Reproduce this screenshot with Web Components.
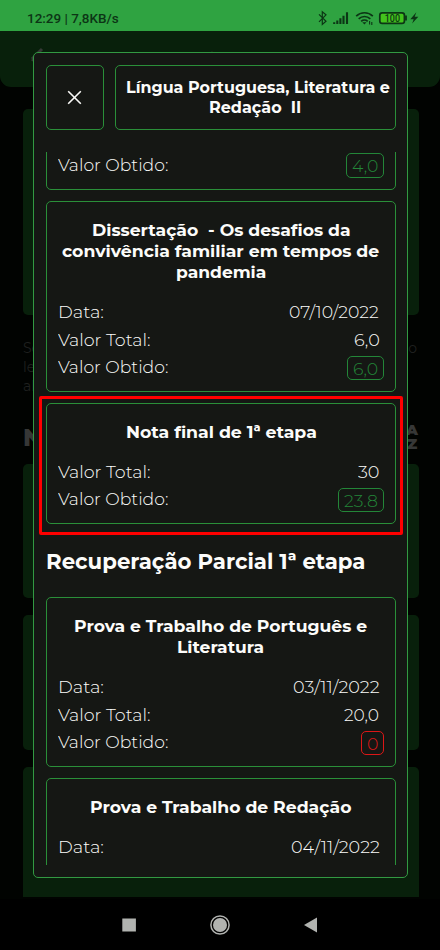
<!DOCTYPE html>
<html lang="pt-BR">
<head>
<meta charset="utf-8">
<title>Notas</title>
<style>
html,body{margin:0;width:440px;height:950px;overflow:hidden;background:#000}
body{font-family:Montserrat,Inter,"Open Sans",sans-serif;color:#fcfcfa}
</style>
</head>
<body>
<phone-screen></phone-screen>
<script>
const define=(name,html,init)=>customElements.define(name,class extends HTMLElement{
  connectedCallback(){
    if(this.shadowRoot)return;
    const t=document.createElement('template');
    t.innerHTML=typeof html==='function'?html(this):html;
    this.attachShadow({mode:'open'}).append(t.content.cloneNode(true));
    if(init)init(this,this.shadowRoot);
  }
});

/* One line of text, condensed or widened to a set width. */
define('fit-line',el=>`<style>:host{display:block;width:${el.getAttribute('w')}px;flex:none;white-space:pre}
span{display:inline-block;transform-origin:0 50%}</style><span></span>`,(el,r)=>{
  const s=r.querySelector('span');s.textContent=el.getAttribute('text');
  if(s.offsetWidth)s.style.transform=`scaleX(${el.getAttribute('w')/s.offsetWidth})`;
});

define('status-bar',`<style>
:host{display:flex;justify-content:space-between;height:31px;background:#2fa341;color:#0c3515;box-sizing:border-box;padding:10px 21px 0 27px;font:500 13.4px/17px Roboto,sans-serif}
svg{display:block;flex:none;margin-top:-10px}</style>
<fit-line w="91.5" text="12:29 | 7,8KB/s"></fit-line>
<svg width="104" height="31" viewBox="315 0 104 31" fill="none" stroke="#0c3515">
<path d="M319 14.3l7 7-3.7 3.2v-12.8l3.7 3.2-7 7" stroke-width="1.2"/>
<path d="M334.2 24v-1.8M337.3 24v-3.6M340.4 24v-5.8M343.5 24v-8.3M347 24v-11.8" stroke-width="2.1"/>
<path d="M356.2 16.1a12 12 0 0 1 16.6 0M358.7 18.8a8.5 8.5 0 0 1 11.6 0M361.2 21.4a4.8 4.8 0 0 1 6.5 0" stroke-width="1.7"/>
<path d="M362.3 22.3h4.2l-2.1 2.2z" fill="#0c3515" stroke="none"/>
<path d="M369.6 21v3.4M371.8 22v3" stroke-width="1.1"/>
<rect x="379.8" y="12.8" width="24.6" height="10.6" rx="2.4" fill="#43c31c" stroke-width="1.7"/>
<path d="M406 15.5v5" stroke-width="1.8"/>
<text x="384.7" y="22" font-family="Roboto,sans-serif" font-size="10" font-weight="500" fill="#0c3515" stroke="none" textLength="15.3" lengthAdjust="spacingAndGlyphs">100</text>
<path d="M416.3 12.3l-6 6.9h3.4l-1.6 4.4 6.2-6.9h-3.6z" fill="#0c3515" stroke="none"/>
</svg>`);

/* The dimmed page that lies behind the dialog. */
define('dimmed-page',`<style>
:host{display:flex;flex-direction:column;flex:1;min-height:0;background:#010301;color:#1f201f;overflow:hidden}
header{height:56px;flex:none;background:#08200b;border-radius:0 0 11px 11px;box-sizing:border-box;padding:16px 0 0 29px;display:flex;color:#363936}
header svg{display:block}
header span{margin:.5px 0 0 115px;font:600 18px/24px Montserrat,Inter,sans-serif}
.block{margin:0 21.5px 0 22.5px;background:#08200b;border-radius:5px;flex:none}
.hint,.head{display:flex;justify-content:space-between;margin:0 22px 0 23px;box-sizing:border-box}
.hint{font-size:14px;line-height:19.2px;height:106px;padding-top:23.5px}
.hint div:last-child{margin-right:1px}
.head{height:42.5px;font-weight:800;color:#363736}
.n{font-size:24px;line-height:30px;margin-top:1.5px}
.az{text-align:center;font-weight:900;font-size:14.5px;display:flex;flex-direction:column;line-height:14px;margin-top:2px}
.list{display:flex;flex-direction:column;gap:17px}
</style>
<header><svg width="16" height="16" viewBox="0 0 16 16" fill="none" stroke="#363936" stroke-width="3"><path d="M13 2L3 12M3 12l4 3"/></svg><span>Boletim</span></header>
<div class="block" style="height:206px;margin-top:22px"></div>
<div class="hint"><div>Se<br>le<br>al</div><div>o</div></div>
<div class="head"><div class="n">N</div><div class="az"><span>A</span><span>Z</span></div></div>
<div class="list"><div class="block" style="height:134.5px"></div><div class="block" style="height:134.5px"></div><div class="block" style="height:130px;border-radius:5px 5px 0 0"></div></div>`);

define('grade-pill',`<style>:host{display:flex;box-sizing:border-box;height:24.5px;border:1px solid currentColor;border-radius:5px;padding:0 5px;color:#238638;margin-top:2px}
:host([low]){color:#dc1717}</style><slot></slot>`);

define('grade-row',el=>{
  const [label,lw,val,vw]=['label','lw','value','vw'].map(k=>el.getAttribute(k));
  const v=`<fit-line w="${vw}" text="${val}"></fit-line>`;
  return `<style>:host{display:flex;justify-content:space-between;align-items:center;height:27.75px;font-weight:350;font-size:17.3px;line-height:23px}
  .v{margin-right:16px}grade-pill{margin-right:11px}</style>
  <fit-line w="${lw}" text="${label}"></fit-line>`+
  (el.hasAttribute('pill')?`<grade-pill ${el.hasAttribute('low')?'low':''}>${v}</grade-pill>`:`<div class="v">${v}</div>`);
});

define('grade-card',`<style>:host{display:block;flex:none;box-sizing:border-box;border:1px solid #2a8f39;border-radius:5px;padding:18px 0 10.5px 11px}
.t{display:flex;flex-direction:column;align-items:center;margin:0 11px 13.8px 0;font-weight:700;font-size:17px;line-height:21.2px}</style>
<div class="t"><slot name="title"></slot></div><slot></slot>`);

define('close-button',`<style>:host{display:flex;align-items:center;justify-content:center;width:58px;box-sizing:border-box;border:1px solid #2a8f39;border-radius:5px;padding-right:1px}</style>
<svg width="15" height="15" viewBox="0 0 15 15" stroke="#fafaf8" stroke-width="1.6"><path d="M1.2 1.2l12.6 12.6M13.8 1.2L1.2 13.8"/></svg>`);

const row=(l,w,v,vw,x='')=>`<grade-row label="${l}" lw="${w}" value="${v}" vw="${vw}" ${x}></grade-row>`;
const date=(v,w)=>row('Data:',45.5,v,w), total=(v,w)=>row('Valor Total:',93,v,w), got=(v,w,x='')=>row('Valor Obtido:',110.5,v,w,'pill '+x);
const title=(t,w)=>`<fit-line slot="title" w="${w}" text="${t}"></fit-line>`;

define('grades-dialog',`<style>
:host{display:flex;flex-direction:column;box-sizing:border-box;background:#151714;border:1px solid #329942;border-radius:5px;padding:12px 11px 12px 12px}
.top{display:flex;gap:11px;height:65px;flex:none}
.name{flex:1;box-sizing:border-box;border:1px solid #2a8f39;border-radius:5px;display:flex;flex-direction:column;align-items:center;justify-content:center;font-weight:700;font-size:16px;line-height:19.5px;padding-left:4px}
.name fit-line:last-child{margin-right:5px}
.scroll{margin-top:22px;flex:1;min-height:0;overflow:hidden;display:flex;flex-direction:column;gap:11px}
.last{height:120px}
h2{margin:0;flex:none;height:51px;box-sizing:border-box;padding-top:11px;font-size:21.3px;line-height:30px;font-weight:700}
</style>
<div class="top"><close-button></close-button><div class="name">${title('Língua Portuguesa, Literatura e',264)}${title('Redação  II',92)}</div></div>
<div class="scroll">
<grade-card class="first">${got('4,0',26)}</grade-card>
<grade-card>${title('Dissertação  - Os desafios da',258.5)}${title('convivência familiar em tempos de',317.5)}${title('pandemia',90.5)}${date('07/10/2022',90)}${total('6,0',25.5)}${got('6,0',25)}</grade-card>
<grade-card>${title('Nota final de 1ª etapa',190.5)}${total('30',21.5)}${got('23.8',34)}</grade-card>
<h2><fit-line w="319.5" text="Recuperação Parcial 1ª etapa"></fit-line></h2>
<grade-card>${title('Prova e Trabalho de Português e',293.5)}${title('Literatura',87.5)}${date('03/11/2022',86.5)}${total('20,0',35.5)}${got('0',11,'low')}</grade-card>
<grade-card class="last">${title('Prova e Trabalho de Redação',261.5)}${date('04/11/2022',88.5)}</grade-card>
</div>`,(el,r)=>{
  /* the list is scrolled so that the first card ends 38px below its top edge */
  const c=r.querySelector('.first');c.style.marginTop=(38-c.offsetHeight)+'px';
});

define('nav-bar',`<style>:host{display:flex;height:51px;flex:none;background:#000;justify-content:center;align-items:center;gap:74px;box-sizing:border-box;padding-top:1px}svg{display:block}</style>
<svg width="14" height="14"><rect width="13.6" height="13" x=".3" y=".5" fill="#b1b3b0"/></svg>
<svg width="20" height="20" viewBox="0 0 20 20"><circle cx="10" cy="10" r="9.1" fill="none" stroke="#b1b3b0" stroke-width="1.5"/><circle cx="10" cy="10" r="7" fill="#b1b3b0"/></svg>
<svg width="14" height="16"><path d="M0 8L13 .5v15z" fill="#b1b3b0"/></svg>`);

define('phone-screen',`<style>
:host{display:flex;flex-direction:column;position:relative;width:440px;height:950px;overflow:hidden}
grades-dialog{position:absolute;left:33px;top:52px;width:375px;height:826px}
.mark{position:absolute;left:39px;top:396px;width:364px;height:139px;box-sizing:border-box;border:3px solid #f00;border-radius:2px}
</style><status-bar></status-bar><dimmed-page></dimmed-page><nav-bar></nav-bar><grades-dialog></grades-dialog><div class="mark"></div>`);
</script>
</body>
</html>
